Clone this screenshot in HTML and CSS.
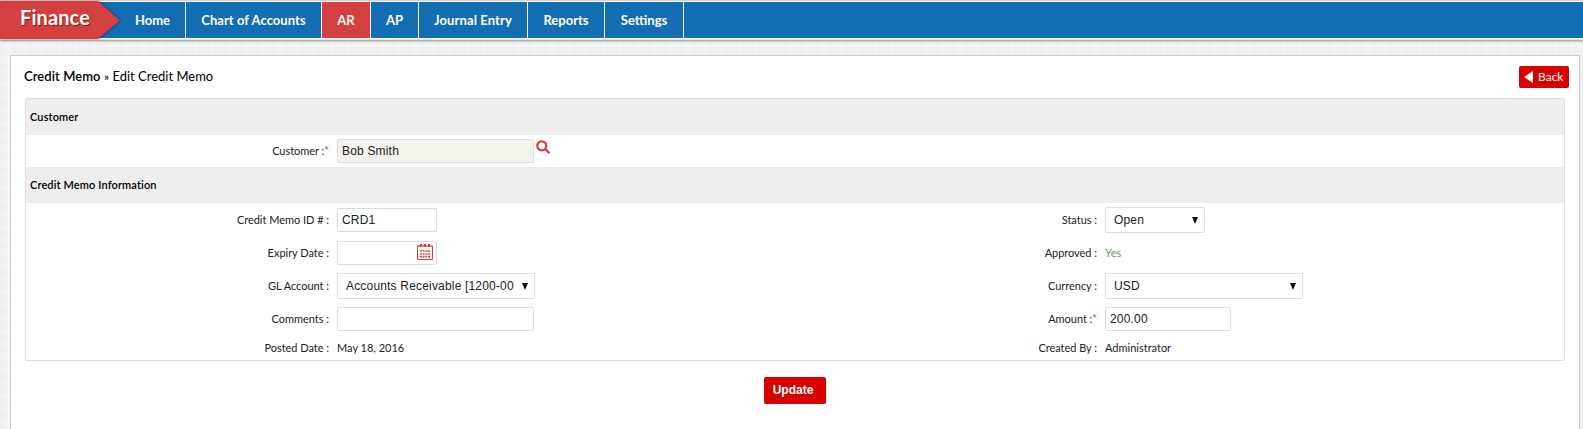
FILE: index.html
```html
<!DOCTYPE html>
<html lang="en">
<head>
<meta charset="utf-8">
<title>Finance - Edit Credit Memo</title>
<link rel="stylesheet" href="styles.css">
</head>
<body>
<header class="topbar">
  <div class="brand"><svg class="brand-shape" width="124" height="41" viewBox="0 0 124 41"><path d="M0 0H98L120 19.5L98 38H0Z"/></svg><span class="brand-name">Finance</span></div>
  <nav class="menu">
    <a class="item home">Home</a><a class="item chart">Chart of Accounts</a><a class="item ar active">AR</a><a class="item ap">AP</a><a class="item journal">Journal Entry</a><a class="item reports">Reports</a><a class="item settings">Settings</a>
  </nav>
</header>
<main class="panel">
  <div class="panel-head">
    <div class="crumb"><b>Credit Memo</b> <span class="sep">»</span> <span class="current">Edit Credit Memo</span></div>
    <a class="back"><svg width="9" height="12" viewBox="0 0 9 12"><path d="M9 0V12L0 6Z" fill="#fff"/></svg><span class="back-text">Back</span></a>
  </div>
  <section class="form">
    <h2 class="title">Customer</h2>
    <div class="row customer">
      <label class="label">Customer :<i>*</i></label>
      <div class="field"><span class="input wide readonly">Bob Smith</span><svg class="search" width="15" height="15" viewBox="0 0 15 15"><circle cx="5.8" cy="5.8" r="4.5"/><path d="M9 9L13.5 13.2"/></svg></div>
    </div>
    <h2 class="title">Credit Memo Information</h2>
    <div class="grid">
      <div class="row"><label class="label">Credit Memo ID # :</label><div class="field"><span class="input small">CRD1</span></div></div>
      <div class="row"><label class="label">Status :</label><div class="field"><span class="select small"><span>Open</span><svg class="arrow" width="6" height="7" viewBox="0 0 6 7"><path d="M0 0H6L3 7Z"/></svg></span></div></div>
      <div class="row"><label class="label">Expiry Date :</label><div class="field"><span class="input small date"><svg class="calendar" width="16" height="16" viewBox="0 0 16 16"><path class="frame" d="M.5 1.5V15.5H15.5V1.5"/><path class="band" d="M1 1H15V3H1z"/><path class="pins" d="M3 0h2v3H3zM7 0h2v3H7zM11 0h2v3H11z"/><path class="dots" d="M3 7H13M3 10H13M3 12.7H13"/></svg></span></div></div>
      <div class="row"><label class="label">Approved :</label><div class="field text yes">Yes</div></div>
      <div class="row"><label class="label">GL Account :</label><div class="field"><span class="select wide"><span>Accounts Receivable [1200-00</span><svg class="arrow" width="6" height="7" viewBox="0 0 6 7"><path d="M0 0H6L3 7Z"/></svg></span></div></div>
      <div class="row"><label class="label">Currency :</label><div class="field"><span class="select wide"><span>USD</span><svg class="arrow" width="6" height="7" viewBox="0 0 6 7"><path d="M0 0H6L3 7Z"/></svg></span></div></div>
      <div class="row"><label class="label">Comments :</label><div class="field"><span class="input wide"></span></div></div>
      <div class="row"><label class="label">Amount :<i>*</i></label><div class="field"><span class="input amount">200.00</span></div></div>
      <div class="row last"><label class="label">Posted Date :</label><div class="field text">May 18, 2016</div></div>
      <div class="row last"><label class="label">Created By :</label><div class="field text">Administrator</div></div>
    </div>
  </section>
  <div class="actions"><button class="update">Update</button></div>
</main>
</body>
</html>
```
FILE: styles.css
```css
* { box-sizing: border-box; }
body {
  margin: 0; height: 429px; overflow: hidden;
  font-family: Lato, sans-serif; font-size: 11px; color: #222;
  background-color: #f1f1f1;
  background-image:
    repeating-linear-gradient(90deg, rgba(0,0,0,.006) 0 2px, transparent 2px 7px, rgba(255,255,255,.2) 7px 10px, transparent 10px 17px),
    repeating-linear-gradient(0deg, rgba(0,0,0,.006) 0 1px, transparent 1px 5px, rgba(255,255,255,.2) 5px 8px, transparent 8px 13px);
}
.topbar {
  display: flex; height: 40px; background: #136db3;
  border-top: 1px solid #d2d2d2; border-bottom: 1px solid #e4e4e4;
  box-shadow: inset 0 1px #fff, inset 0 -1px #fff, 0 1px 2px rgba(0,0,0,.4);
}
.brand { position: relative; width: 120px; height: 38px; flex: none; padding-left: 20px; }
.brand-shape { position: absolute; left: 0; top: 0; fill: #d43f3f; filter: drop-shadow(1px 0 1px rgba(0,0,0,.4)); }
.brand-name { position: relative; font-size: 20px; line-height: 32px; font-weight: 700; letter-spacing: .1px; color: #fff; text-shadow: 1px 1px 1px rgba(90,0,0,.6); }
.menu { display: flex; padding: 1px 0; }
.item { display: flex; align-items: center; justify-content: center; height: 36px; border-right: 1px solid #fff; color: #fff; font-size: 13px; font-weight: 700; }
.home { width: 66px; }
.chart { width: 136px; letter-spacing: .05px; }
.ar { width: 49px; }
.ap { width: 48px; }
.journal { width: 109px; letter-spacing: .12px; }
.reports { width: 77px; }
.settings { width: 79px; }
.active { background: #d43f3f; }
.panel { margin: 15px 3px 0 10px; height: 374px; background: #fff; border: 1px solid #ccc; border-bottom: 0; }
.panel-head { display: flex; justify-content: space-between; height: 42px; padding: 10px 10px 0 13px; }
.crumb { font-size: 13px; line-height: 20px; color: #000; white-space: nowrap; }
.crumb b { font-weight: 600; letter-spacing: .08px; }
.sep { font-size: 12px; }
.back { display: flex; align-items: center; gap: 5px; width: 50px; height: 22px; padding-left: 5px; border-radius: 2px; background: #d80000; color: #fff; font-size: 12px; }
.back-text { padding-bottom: 1px; }
.form { margin: 0 14px; height: 263px; border: 1px solid #ddd; border-radius: 2px; }
.title { margin: 0; height: 36px; padding-left: 4px; line-height: 35px; background: #eee; color: #000; font-size: 11px; font-weight: 600; letter-spacing: .12px; }
.grid { display: grid; grid-template-columns: 768px 1fr; grid-auto-rows: 33px; padding-top: 1px; }
.row { display: flex; gap: 8px; align-items: flex-start; }
.label { width: 303px; padding-top: 8px; line-height: 16px; text-align: right; white-space: nowrap; letter-spacing: -.03px; }
.label i { font-style: normal; color: #e33; }
.field { display: flex; }
.customer { height: 32px; }
.input, .select { display: flex; align-items: center; border: 1px solid #d8dee8; border-radius: 2px; background: #fff; font-family: "Liberation Sans", Arial, sans-serif; font-size: 12px; letter-spacing: .18px; color: #222; white-space: nowrap; }
.input { height: 24px; margin-top: 4px; padding-left: 4px; }
.select { height: 26px; margin-top: 3px; padding: 0 6px 0 8px; justify-content: space-between; }
.small { width: 100px; }
.input.wide { width: 197px; }
.select.wide { width: 198px; }
.amount { width: 126px; }
.readonly { background: #f3f3ec; }
.search { margin: 5px 0 0 2px; fill: none; stroke: #d43f3f; stroke-width: 2.3; }
.date { justify-content: flex-end; padding-right: 3px; padding-bottom: 2px; }
.calendar { fill: none; stroke: #d43f3f; }
.calendar .pins { fill: #d43f3f; stroke: none; }
.calendar .band { fill: #e58a8a; stroke: none; }
.calendar .dots { stroke-width: 1.7; stroke-dasharray: 1.9 .8; }
.arrow { fill: #111; }
.text { padding-top: 8px; line-height: 16px; }
.yes { color: #6a9160; }
.last .label, .last .text { padding-top: 4px; }
.actions { display: flex; justify-content: center; padding-top: 16px; }
.update { width: 62px; height: 27px; padding: 0 4px 2px 0; border: 0; border-radius: 2px; background: #d80000; color: #fff; font: 700 12px "Liberation Sans", Arial, sans-serif; }
```
